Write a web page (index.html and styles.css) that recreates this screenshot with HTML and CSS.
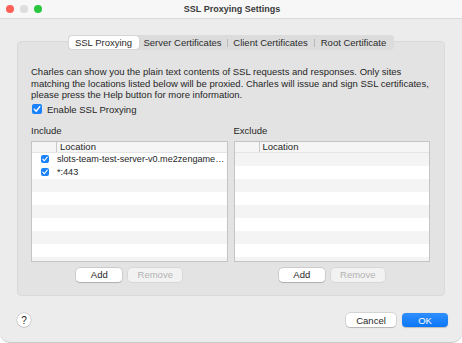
FILE: index.html
```html
<!DOCTYPE html>
<html lang="en">
<head>
  <meta charset="UTF-8">
  <meta name="viewport" content="width=device-width, initial-scale=1.0">
  <title>SSL Proxying Settings</title>
  <link rel="stylesheet" href="styles.css">
</head>
<body>
  <div class="window">
    <div class="titlebar">
      <div class="lights">
        <span class="light red"></span>
        <span class="light grey"></span>
        <span class="light green"></span>
      </div>
      <div class="title">SSL Proxying Settings</div>
    </div>

    <div class="group">
      <div class="tabs">
        <span class="tab active">SSL Proxying</span>
        <span class="tab">Server Certificates</span>
        <span class="sep"></span>
        <span class="tab">Client Certificates</span>
        <span class="sep"></span>
        <span class="tab">Root Certificate</span>
      </div>

      <p class="desc">Charles can show you the plain text contents of SSL requests and responses. Only sites<br>matching the locations listed below will be proxied. Charles will issue and sign SSL certificates,<br>please press the Help button for more information.</p>

      <label class="enable"><span class="check big"><svg viewBox="0 0 10 10"><path d="M2.3 5.2 L4.2 7.2 L7.8 2.6" /></svg></span>Enable SSL Proxying</label>

      <div class="lists">
        <div class="list">
          <div class="list-label">Include</div>
          <div class="table">
            <div class="thead"><span class="col-check"></span><span class="col-loc">Location</span></div>
            <div class="row"><span class="col-check"><span class="check"><svg viewBox="0 0 10 10"><path d="M2.3 5.2 L4.2 7.2 L7.8 2.6" /></svg></span></span><span class="col-loc">slots-team-test-server-v0.me2zengame.com</span></div>
            <div class="row"><span class="col-check"><span class="check"><svg viewBox="0 0 10 10"><path d="M2.3 5.2 L4.2 7.2 L7.8 2.6" /></svg></span></span><span class="col-loc">*:443</span></div>
            <div class="row stripe"></div>
            <div class="row"></div>
            <div class="row stripe"></div>
            <div class="row"></div>
            <div class="row stripe"></div>
            <div class="row"></div>
            <div class="row stripe"></div>
          </div>
          <div class="buttons">
            <button class="btn add">Add</button>
            <button class="btn remove" disabled>Remove</button>
          </div>
        </div>

        <div class="list">
          <div class="list-label">Exclude</div>
          <div class="table">
            <div class="thead"><span class="col-check"></span><span class="col-loc">Location</span></div>
            <div class="row stripe"></div>
            <div class="row"></div>
            <div class="row stripe"></div>
            <div class="row"></div>
            <div class="row stripe"></div>
            <div class="row"></div>
            <div class="row stripe"></div>
            <div class="row"></div>
            <div class="row stripe"></div>
          </div>
          <div class="buttons">
            <button class="btn add">Add</button>
            <button class="btn remove" disabled>Remove</button>
          </div>
        </div>
      </div>
    </div>

    <div class="footer">
      <button class="help">?</button>
      <div class="actions">
        <button class="btn cancel">Cancel</button>
        <button class="btn ok">OK</button>
      </div>
    </div>
  </div>
</body>
</html>
```

FILE: styles.css
```css
* { box-sizing: border-box; }
html, body { margin: 0; padding: 0; background: #ffffff; }
body { font-family: "Liberation Sans", Arial, sans-serif; font-size: 9.5px; color: #262626; }

.window { width: 462px; height: 343px; background: #ececec; border-radius: 0 0 10px 10px; overflow: hidden; border-bottom: 1px solid #c9c9c9; }

.titlebar { height: 19px; background: #f7f7f7; border-bottom: 1px solid #dadada; display: flex; align-items: center; }
.lights { display: flex; gap: 6px; padding-left: 6px; }
.light { width: 8px; height: 8px; border-radius: 50%; display: block; }
.light.red { background: #fe5f57; }
.light.grey { background: #dddddd; }
.light.green { background: #29c73f; }
.title { flex: 1; text-align: center; font-weight: bold; font-size: 9px; color: #3a3a3a; margin-left: -40px; }

.group { margin: 22px 17px 0; height: 255px; background: #e3e3e3; border: 1px solid #dadada; border-radius: 4px; padding: 0 14px 0 13px; }

.tabs { display: flex; align-items: center; width: 326px; height: 15px; margin: -7px auto 0; background: #dcdcdc; border-radius: 4px; padding: 0 1px; white-space: nowrap; }
.tab { flex: none; height: 13px; line-height: 13px; text-align: center; color: #2b2b2b; }
.tab.active { background: #ffffff; border-radius: 3px; box-shadow: 0 0 1px rgba(0,0,0,0.25); width: 70px; }
.tab:nth-child(2) { width: 88px; }
.tab:nth-child(4) { width: 86px; }
.tab:nth-child(6) { flex: 1; }
.sep { flex: none; width: 1px; height: 8px; background: #b9b9b9; }

.desc { margin: 16px 0 0; line-height: 11.5px; }

.enable { display: flex; align-items: center; height: 11.5px; margin-top: 3px; gap: 5px; padding-left: 1px; }

.check { width: 8px; height: 8px; border-radius: 2px; background: #1a82fb; display: inline-flex; }
.check.big { width: 10px; height: 10px; }
.check svg { width: 100%; height: 100%; }
.check path { fill: none; stroke: #ffffff; stroke-width: 1.4; stroke-linecap: round; stroke-linejoin: round; }

.lists { display: grid; grid-template-columns: minmax(0, 1fr) minmax(0, 1fr); gap: 6px; margin-top: 10px; }
.list-label { height: 11.5px; line-height: 11.5px; margin-bottom: 4px; }

.table { height: 121px; background: #ffffff; border: 1px solid #c4c4c4; overflow: hidden; }
.thead { display: flex; height: 11px; line-height: 10px; background: #f5f5f5; border-bottom: 1px solid #e4e4e4; }
.thead .col-loc { border-left: 1px solid #c8c8c8; padding-left: 3px; }
.row { display: flex; align-items: center; height: 13px; font-size: 9.1px; }
.row.stripe { background: #f4f4f4; }
.col-check { width: 24px; flex: none; display: flex; justify-content: center; padding-left: 2px; }
.col-loc { flex: 1; min-width: 0; white-space: nowrap; overflow: hidden; text-overflow: ellipsis; padding-left: 1px; padding-right: 2px; }

.buttons { display: flex; justify-content: center; gap: 6px; margin-top: 6px; }

.btn { font-family: inherit; font-size: 9.5px; height: 14px; padding: 0; border: none; border-radius: 4px; background: #ffffff; color: #262626; box-shadow: 0 0 0 0.5px rgba(0,0,0,0.18), 0 0.5px 1px rgba(0,0,0,0.15); }
.btn.add { width: 46px; }
.btn.remove { width: 54px; background: #f2f2f2; color: #b3b3b3; box-shadow: 0 0 0 0.5px rgba(0,0,0,0.1); }

.footer { display: flex; align-items: center; justify-content: space-between; padding: 0 14px 0 17px; margin-top: 17px; }
.help { width: 14px; height: 14px; border-radius: 50%; border: none; background: #ffffff; font-family: inherit; font-size: 10px; padding: 0; color: #222; box-shadow: 0 0 0 0.5px rgba(0,0,0,0.2), 0 0.5px 1px rgba(0,0,0,0.15); }
.actions { display: flex; gap: 6px; }
.btn.cancel { width: 50px; }
.btn.ok { width: 46px; background: linear-gradient(#2f8fff, #0a76f6); color: #ffffff; box-shadow: 0 0.5px 1px rgba(0,0,0,0.2); }
```
